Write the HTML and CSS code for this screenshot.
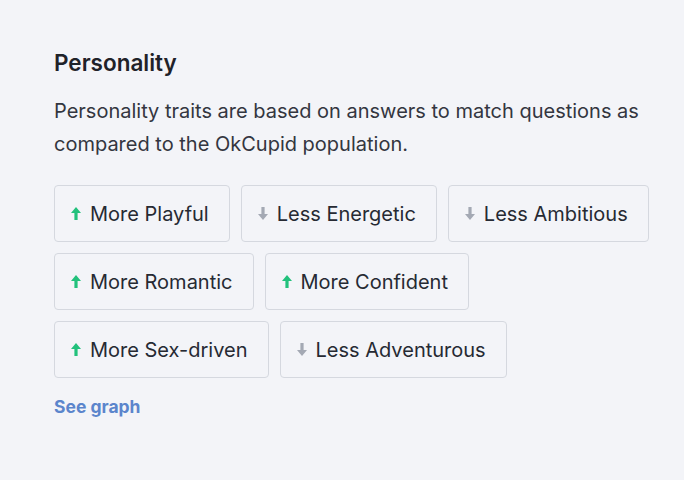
FILE: index.html
```html
<!DOCTYPE html>
<html lang="en">

<head>
    <meta charset="UTF-8">
    <meta name="viewport" content="width=device-width, initial-scale=1.0">
    <title>Personality</title>
    <link rel="stylesheet" href="styles.css">
</head>

<body>
    <section class="personality">
        <h2 class="title">Personality</h2>
        <p class="desc">Personality traits are based on answers to match questions as compared to the OkCupid population.</p>
        <div class="traits">
            <div class="trait-row">
                <div class="trait more">
                    <svg class="arrow" viewBox="0 0 10 13"><path d="M5 0 L10 6 L6.6 6 L6.6 13 L3.4 13 L3.4 6 L0 6 Z"/></svg>
                    <span>More Playful</span>
                </div>
                <div class="trait less">
                    <svg class="arrow" viewBox="0 0 10 13"><path d="M5 13 L10 7 L6.6 7 L6.6 0 L3.4 0 L3.4 7 L0 7 Z"/></svg>
                    <span>Less Energetic</span>
                </div>
                <div class="trait less">
                    <svg class="arrow" viewBox="0 0 10 13"><path d="M5 13 L10 7 L6.6 7 L6.6 0 L3.4 0 L3.4 7 L0 7 Z"/></svg>
                    <span>Less Ambitious</span>
                </div>
            </div>
            <div class="trait-row">
                <div class="trait more">
                    <svg class="arrow" viewBox="0 0 10 13"><path d="M5 0 L10 6 L6.6 6 L6.6 13 L3.4 13 L3.4 6 L0 6 Z"/></svg>
                    <span>More Romantic</span>
                </div>
                <div class="trait more">
                    <svg class="arrow" viewBox="0 0 10 13"><path d="M5 0 L10 6 L6.6 6 L6.6 13 L3.4 13 L3.4 6 L0 6 Z"/></svg>
                    <span>More Confident</span>
                </div>
            </div>
            <div class="trait-row">
                <div class="trait more">
                    <svg class="arrow" viewBox="0 0 10 13"><path d="M5 0 L10 6 L6.6 6 L6.6 13 L3.4 13 L3.4 6 L0 6 Z"/></svg>
                    <span>More Sex-driven</span>
                </div>
                <div class="trait less">
                    <svg class="arrow" viewBox="0 0 10 13"><path d="M5 13 L10 7 L6.6 7 L6.6 0 L3.4 0 L3.4 7 L0 7 Z"/></svg>
                    <span>Less Adventurous</span>
                </div>
            </div>
        </div>
        <a class="see-graph" href="#">See graph</a>
    </section>
</body>

</html>
```

FILE: styles.css
```css
body {
    margin: 0;
    height: 100vh;
    background-color: #f3f4f8;
    font-family: Inter, "Noto Sans", sans-serif;
    color: #1f2229;
}

.personality {
    padding: 48px 30px 0 54px;
}

.title {
    margin: 0;
    font-size: 22.5px;
    font-weight: 600;
    line-height: 30px;
}

.desc {
    margin: 17px 0 0;
    font-size: 20px;
    line-height: 33px;
    color: #333640;
}

.traits {
    display: flex;
    flex-direction: column;
    gap: 11px;
    margin-top: 24px;
}

.trait-row {
    display: flex;
    gap: 11px;
}

.trait {
    display: flex;
    align-items: center;
    height: 57px;
    box-sizing: border-box;
    padding: 0 20px 0 16px;
    border: 1px solid #d5d8df;
    border-radius: 4px;
    background-color: #f3f4f8;
    font-size: 20px;
    color: #262a33;
}

.arrow {
    width: 10px;
    height: 13px;
    margin-right: 9px;
}

.more .arrow {
    fill: #22c17c;
}

.less .arrow {
    fill: #a4a9b4;
}

.see-graph {
    display: inline-block;
    margin-top: 18px;
    font-size: 17.5px;
    font-weight: 700;
    color: #5b85cc;
    text-decoration: none;
}
```
